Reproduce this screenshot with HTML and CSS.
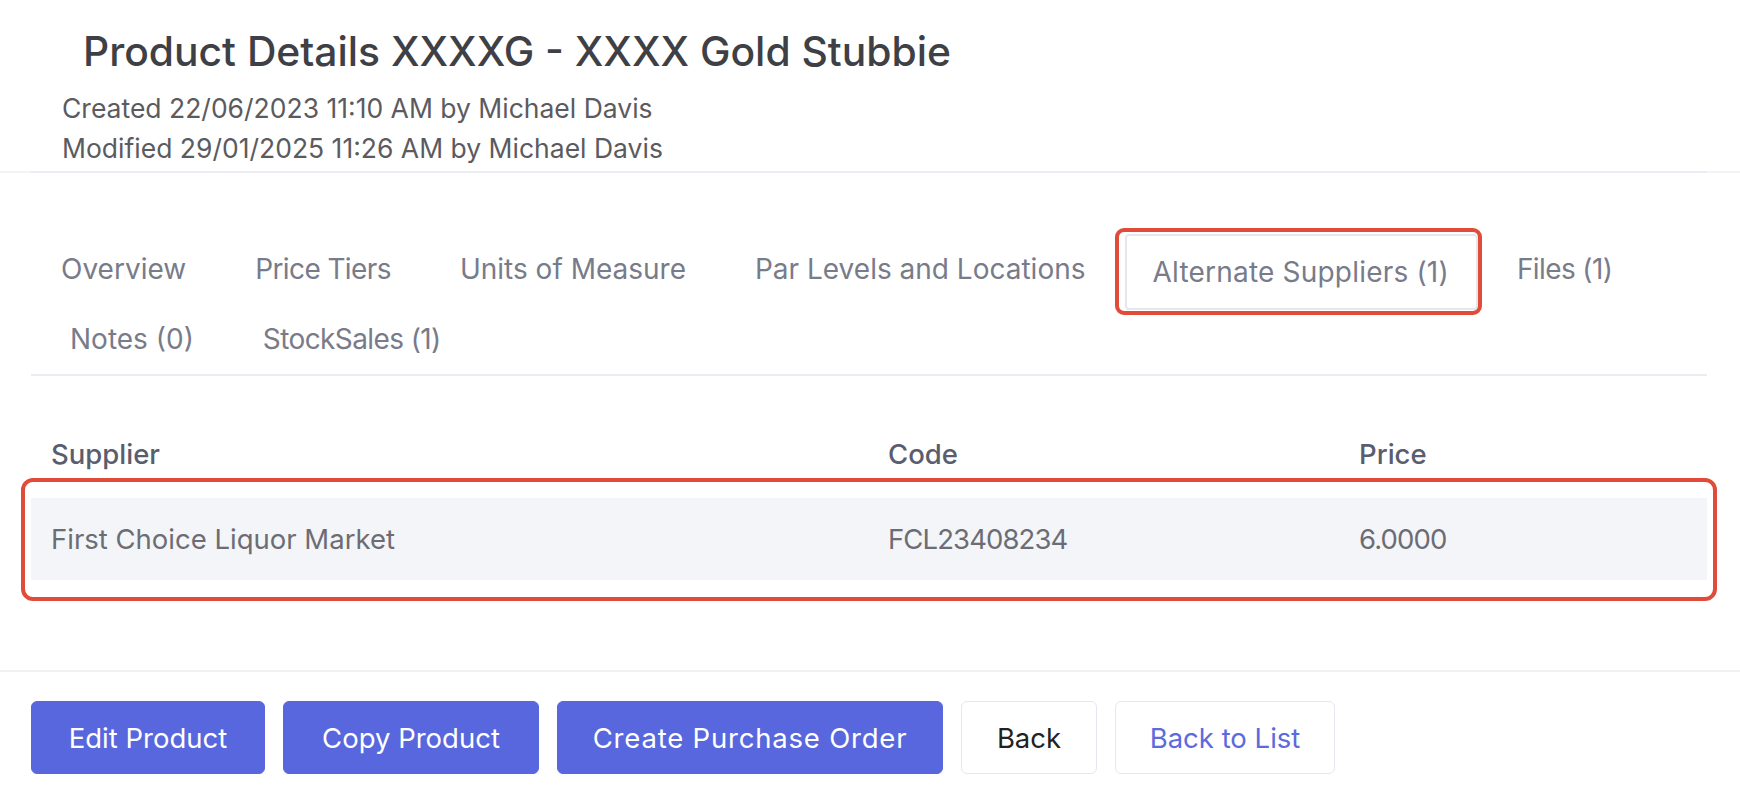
FILE: index.html
```html
<!DOCTYPE html>
<html lang="en">
<head>
<meta charset="utf-8">
<title>Product Details XXXXG - XXXX Gold Stubbie</title>
<link rel="stylesheet" href="styles.css">
</head>
<body>
<header class="head">
  <div class="wrap">
    <h1 class="title">Product Details XXXXG - XXXX Gold Stubbie</h1>
    <div class="meta">
      <div>Created 22/06/2023 11:10 AM by Michael Davis</div>
      <div>Modified 29/01/2025 11:26 AM by Michael Davis</div>
    </div>
  </div>
</header>
<div class="divider"><span class="divider-inner"></span></div>

<main class="wrap">
  <nav class="tabs">
    <a class="tab">Overview</a>
    <a class="tab tab-tight">Price Tiers</a>
    <a class="tab">Units of Measure</a>
    <a class="tab">Par Levels and Locations</a>
    <a class="tab active">Alternate Suppliers (1)<span class="mark mark-tab"></span></a>
    <a class="tab tab-tight">Files (1)</a>
    <a class="tab tab-second">Notes (0)</a>
    <a class="tab tab-tight">StockSales (1)</a>
  </nav>

  <section class="table">
    <div class="trow thead">
      <div class="cell">Supplier</div>
      <div class="cell">Code</div>
      <div class="cell">Price</div>
    </div>
    <div class="trow tbody">
      <div class="cell">First Choice Liquor Market</div>
      <div class="cell cell-num">FCL23408234</div>
      <div class="cell cell-num">6.0000</div>
      <span class="mark mark-row"></span>
    </div>
  </section>
</main>

<div class="foot-rule"></div>
<footer class="wrap actions">
  <button class="btn btn-primary btn-edit">Edit Product</button>
  <button class="btn btn-primary btn-copy">Copy Product</button>
  <button class="btn btn-primary btn-po">Create Purchase Order</button>
  <button class="btn btn-light btn-back">Back</button>
  <button class="btn btn-light btn-list">Back to List</button>
</footer>
</body>
</html>
```

FILE: styles.css
```css
* { box-sizing: border-box; }

html, body {
  margin: 0;
  padding: 0;
  background: #ffffff;
}

body {
  font-family: Inter, "Open Sans", "Liberation Sans", sans-serif;
  font-size: 27.5px;
  color: #595d6e;
  width: 1740px;
  height: 797px;
  overflow: hidden;
}

.wrap {
  margin: 0 33px 0 31px;
}

/* Header */
.head {
  padding-top: 28px;
}

.title {
  margin: 0 0 14px 52px;
  font-size: 40.8px;
  line-height: 46px;
  font-weight: 500;
  color: #3f3f46;
}

.meta {
  margin-left: 31px;
  font-size: 26.5px;
  line-height: 40px;
  color: #5b5b5f;
}

.divider {
  margin-top: 3px;
  height: 2px;
  background: #f3f4f7;
}

.divider-inner {
  display: block;
  height: 2px;
  margin: 0 33px 0 31px;
  background: #ebedf2;
}

/* Tabs */
.tabs {
  display: flex;
  flex-wrap: wrap;
  align-items: flex-start;
  padding: 61px 0 0 2px;
  border-bottom: 2px solid #ebedf2;
  font-size: 28px;
}

.tab {
  position: relative;
  display: block;
  height: 70px;
  line-height: 70px;
  padding: 0 28px;
  margin-right: 13px;
  color: #787b8a;
  white-space: nowrap;
}

.tab-tight {
  letter-spacing: -0.6px;
}

.tab.active {
  height: 76px;
  margin-bottom: -6px;
  line-height: 72px;
  border: 2px solid #e6e7ec;
  border-radius: 4px;
  padding: 0 27px 0 26px;
  margin-left: -2px;
  margin-right: 11px;
  background: #ffffff;
  letter-spacing: 0.2px;
}

.tab-second {
  margin-left: 9px;
}

/* Annotation marks */
.mark {
  position: absolute;
  border: 4px solid #e04b3a;
  pointer-events: none;
}

.mark-tab {
  top: -8px;
  bottom: -7px;
  left: -12px;
  right: -6px;
  border-radius: 9px;
}

.mark-row {
  top: -20px;
  bottom: -21px;
  left: -10px;
  right: -10px;
  border-radius: 12px;
}

/* Table */
.table {
  margin-top: 48px;
}

.trow {
  position: relative;
  display: grid;
  grid-template-columns: 837px 471px 1fr;
  align-items: center;
}

.cell {
  padding-left: 20px;
  white-space: nowrap;
}

.cell-num {
  letter-spacing: -0.9px;
}

.thead {
  height: 60px;
  font-weight: 500;
  color: #595d6e;
}

.tbody {
  margin-top: 14px;
  height: 82px;
  background: #f4f5f8;
  color: #6c6d74;
}

/* Footer */
.foot-rule {
  margin-top: 90px;
  height: 2px;
  background: #f0f1f5;
}

.actions {
  display: flex;
  gap: 18px;
  padding-top: 29px;
}

.btn {
  height: 73px;
  padding: 0;
  border-radius: 6px;
  font-family: inherit;
  font-size: 27.5px;
  font-weight: 400;
  text-align: center;
  border: 1px solid transparent;
  cursor: pointer;
}

.btn-edit { width: 234px; }
.btn-copy { width: 256px; }
.btn-po { width: 386px; letter-spacing: 0.8px; }
.btn-back { width: 136px; }
.btn-list { width: 220px; }

.btn-primary {
  background: #5867dd;
  border-color: #5867dd;
  color: #ffffff;
}

.btn-light {
  background: #ffffff;
  border-color: #e6e8ef;
}

.btn-back {
  color: #222222;
}

.btn-list {
  color: #5c6ade;
}
```
